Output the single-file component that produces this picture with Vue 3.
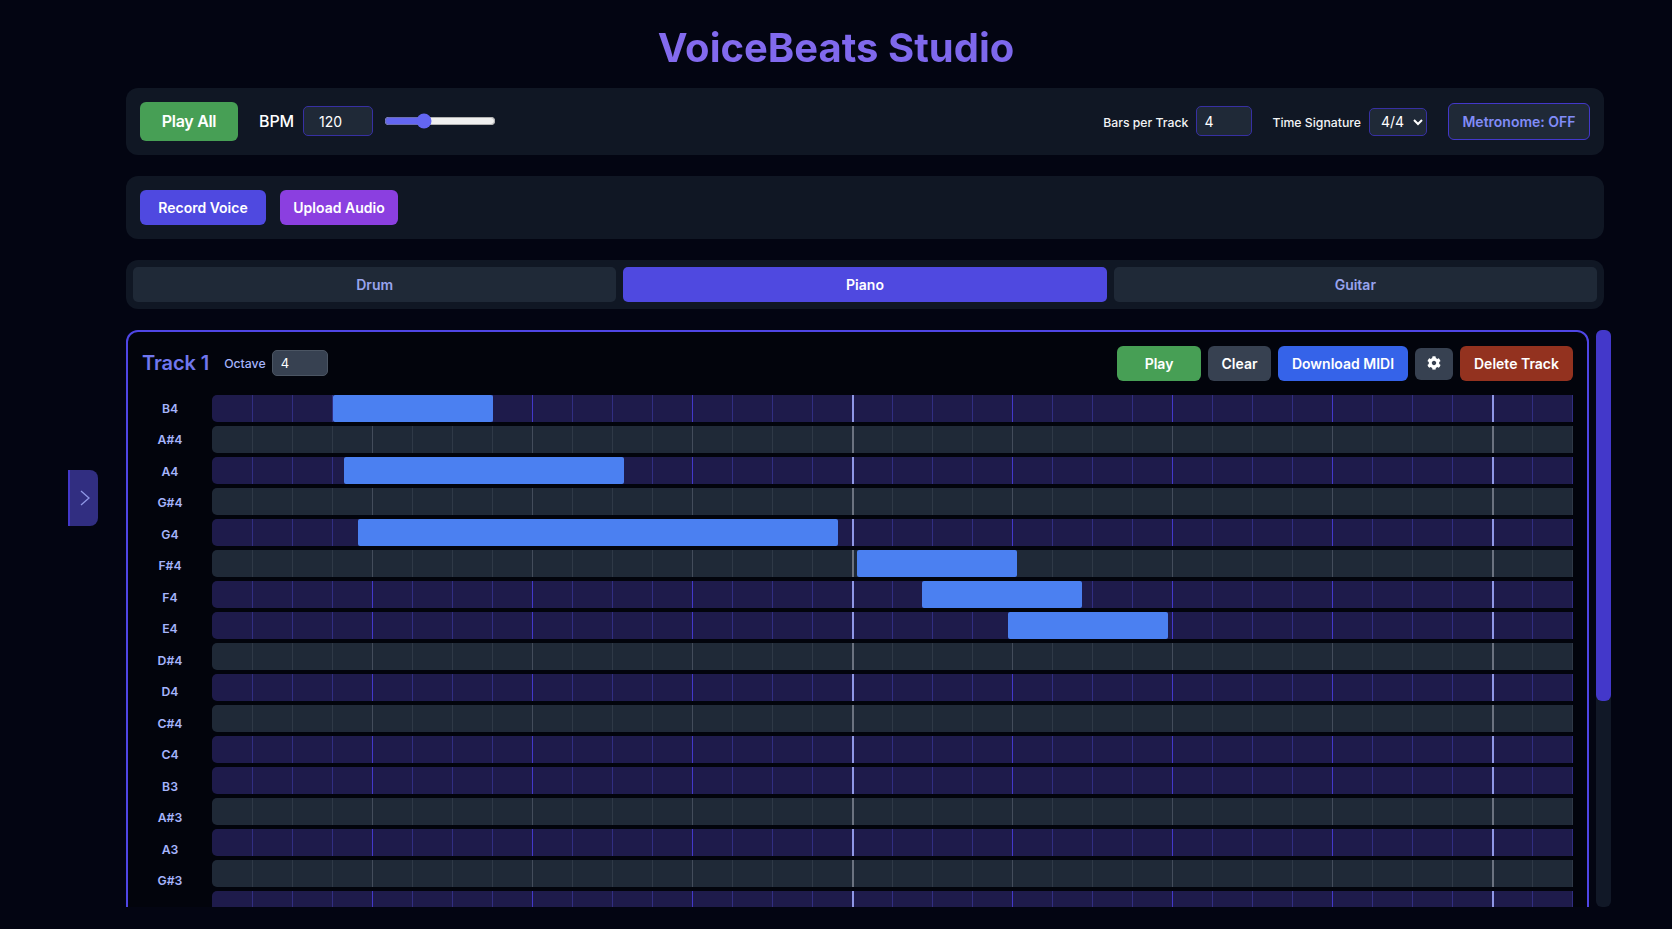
<template>
  <div class="page">
    <button class="side-toggle">
      <svg width="12" height="18" viewBox="0 0 12 18" fill="none"><path d="M3 2l8 7-8 7" stroke="#8f97e6" stroke-width="1.300" /></svg>
    </button>

    <h1 class="title">VoiceBeats Studio</h1>

    <div class="panel controls">
      <button class="btn btn-play-all">Play All</button>
      <span class="bpm-label">BPM</span>
      <input class="field bpm-input" type="number" value="120" />
      <input class="bpm-slider" type="range" min="60" max="240" value="120" />

      <div class="controls-right">
        <label class="small-label">Bars per Track</label>
        <input class="field bars-input" type="number" value="4" />
        <label class="small-label sig-label">Time Signature</label>
        <select class="field sig-select">
          <option>4/4</option>
          <option>3/4</option>
          <option>6/8</option>
        </select>
        <button class="btn btn-metronome">Metronome: OFF</button>
      </div>
    </div>

    <div class="panel actions">
      <button class="btn btn-record">Record Voice</button>
      <button class="btn btn-upload">Upload Audio</button>
    </div>

    <div class="panel tabs">
      <button
        v-for="tab in tabs"
        :key="tab"
        class="tab"
        :class="{ active: tab === 'Piano' }"
      >{{ tab }}</button>
    </div>

    <div class="tracks-area">
      <div class="tracks">
        <div class="track-card">
          <div class="track-header">
            <h2 class="track-name">Track 1</h2>
            <label class="octave-label">Octave</label>
            <input class="octave-input" type="number" value="4" />
            <div class="track-buttons">
              <button class="btn track-btn btn-play">Play</button>
              <button class="btn track-btn btn-clear">Clear</button>
              <button class="btn track-btn btn-download">Download MIDI</button>
              <button class="btn btn-gear" aria-label="Settings">
                <svg width="14" height="14" viewBox="0 0 512 512"><path fill="#fff" d="M487.4 315.7l-42.6-24.6c4.300-23.200 4.300-47 0-70.200l42.600-24.600c4.900-2.800 7.100-8.600 5.500-14-11.100-35.600-30-67.800-54.700-94.600-3.800-4.100-10-5.100-14.800-2.300L380.800 110c-17.900-15.400-38.500-27.300-60.800-35.100V25.800c0-5.600-3.900-10.500-9.400-11.700-36.700-8.200-74.300-7.800-109.200 0-5.500 1.200-9.400 6.100-9.400 11.700V75c-22.200 7.900-42.800 19.800-60.800 35.100L88.700 85.500c-4.900-2.800-11-1.900-14.800 2.300-24.700 26.700-43.600 58.900-54.700 94.600-1.700 5.400.6 11.200 5.500 14L67.300 221c-4.300 23.200-4.300 47 0 70.200l-42.600 24.600c-4.900 2.800-7.100 8.600-5.500 14 11.100 35.600 30 67.800 54.700 94.600 3.800 4.100 10 5.100 14.800 2.300l42.600-24.600c17.900 15.400 38.500 27.300 60.800 35.100v49.200c0 5.600 3.900 10.500 9.400 11.700 36.700 8.200 74.300 7.800 109.200 0 5.500-1.200 9.400-6.100 9.400-11.700v-49.200c22.200-7.900 42.800-19.800 60.800-35.100l42.600 24.600c4.900 2.800 11 1.900 14.800-2.300 24.700-26.700 43.600-58.900 54.700-94.600 1.500-5.500-.7-11.300-5.600-14.100zM256 336c-44.100 0-80-35.900-80-80s35.900-80 80-80 80 35.900 80 80-35.900 80-80 80z" /></svg>
              </button>
              <button class="btn track-btn btn-delete">Delete Track</button>
            </div>
          </div>

          <div class="roll">
            <div class="keys">
              <div v-for="row in rows" :key="row.name" class="key">{{ row.name }}</div>
            </div>
            <div class="grid">
              <div
                v-for="row in rows"
                :key="row.name"
                class="grid-row"
                :class="row.sharp ? 'sharp' : 'natural'"
              >
                <div
                  v-for="i in cellCount"
                  :key="i"
                  class="cell"
                  :class="cellClass(i - 1)"
                ></div>
                <div
                  v-for="note in notesFor(row.name)"
                  :key="note.left"
                  class="note"
                  :style="{ left: note.left + 'px', width: note.width + 'px' }"
                ></div>
              </div>
            </div>
          </div>
        </div>
      </div>

      <div class="scrollbar">
        <div class="scrollbar-thumb"></div>
      </div>
    </div>
  </div>
</template>

<script setup>
const tabs = ['Drum', 'Piano', 'Guitar']

const cellCount = 36

// rows going down from B4, only what fits in the view
const names = ['B', 'A#', 'A', 'G#', 'G', 'F#', 'F', 'E', 'D#', 'D', 'C#', 'C']
const rows = []
for (let i = 0; i < 17; i++) {
  const name = names[i % 12]
  const octave = 4 - Math.floor(i / 12)
  rows.push({ name: name + octave, sharp: name.includes('#') })
}

const notes = [
  { key: 'B4', left: 121, width: 160 },
  { key: 'A4', left: 132, width: 280 },
  { key: 'G4', left: 146, width: 480 },
  { key: 'F#4', left: 645, width: 160 },
  { key: 'F4', left: 710, width: 160 },
  { key: 'E4', left: 796, width: 160 }
]

const notesFor = (name) => notes.filter((n) => n.key === name)

const cellClass = (i) => {
  if (i === 0) return 'first'
  if (i % 16 === 0) return 'bar'
  if (i % 4 === 0) return 'beat'
  return ''
}
</script>

<style>
html,
body {
  margin: 0;
  background: #030512;
  overflow: hidden;
}
</style>

<style scoped>
.page {
  position: relative;
  box-sizing: border-box;
  height: 100vh;
  padding: 25px 68px 22px 126px;
  display: flex;
  flex-direction: column;
  gap: 21px;
  background: #030512;
  font-family: Inter, "Noto Sans", sans-serif;
  color: #fff;
}

.title {
  margin: 0 0 -4px -58px;
  text-align: center;
  font-size: 40px;
  line-height: 46px;
  font-weight: 700;
  background: linear-gradient(90deg, #8e70f2, #7262e8);
  -webkit-background-clip: text;
  background-clip: text;
  color: transparent;
}

.side-toggle {
  position: absolute;
  left: 68px;
  top: 470px;
  width: 30px;
  height: 56px;
  padding: 0;
  border: 0;
  border-left: 2px solid #4338ca;
  border-radius: 0 8px 8px 0;
  background: #312e81;
  display: flex;
  align-items: center;
  justify-content: center;
}

.panel {
  flex: none;
  box-sizing: border-box;
  background: #101724;
  border-radius: 12px;
  display: flex;
  align-items: center;
}

.btn {
  border: 0;
  border-radius: 6px;
  color: #fff;
  font-family: inherit;
  font-weight: 600;
  font-size: 14px;
  padding: 0;
}

.controls {
  height: 67px;
  padding: 0 14px;
}

.btn-play-all {
  width: 98px;
  height: 39px;
  padding-bottom: 1px;
  font-size: 16px;
  letter-spacing: -0.3px;
  background: #479f55;
}

.bpm-label {
  margin: 0 0 1px 21px;
  font-size: 16px;
  font-weight: 500;
  letter-spacing: -0.1px;
}

.field {
  box-sizing: border-box;
  background: #1f2937;
  border: 1px solid #3730a3;
  border-radius: 5px;
  color: #fff;
  font-family: inherit;
  font-size: 14px;
}

.bpm-input {
  width: 70px;
  height: 30px;
  margin: -1px 0 0 9px;
  padding: 0 0 0 15px;
}

.bpm-slider {
  width: 112px;
  margin: -1px 0 0 11px;
  accent-color: #6366f1;
}

.controls-right {
  margin-left: auto;
  display: flex;
  align-items: center;
}

.small-label {
  margin-top: 1px;
  font-size: 12.25px;
  font-weight: 500;
  color: #f3f4f6;
}

.bars-input {
  width: 56px;
  height: 30px;
  margin: -1px 0 0 8px;
  padding: 0 0 0 7px;
}

.sig-label {
  margin-left: 20px;
}

.sig-select {
  width: 58px;
  height: 28px;
  margin-left: 8px;
  padding: 0 0 0 7px;
}

.btn-metronome {
  box-sizing: border-box;
  width: 142px;
  height: 37px;
  margin-left: 21px;
  background: #1f2937;
  border: 1px solid #4338ca;
  color: #818cf8;
}

.actions {
  height: 63px;
  padding: 0 14px;
  gap: 14px;
}

.btn-record {
  width: 126px;
  height: 35px;
  background: #4f49e0;
}

.btn-upload {
  width: 118px;
  height: 35px;
  background: #8b3fe0;
}

.tabs {
  height: 49px;
  padding: 0 7px;
  gap: 7px;
}

.tab {
  flex: 1;
  height: 35px;
  border: 0;
  border-radius: 5px;
  background: #1f2937;
  color: #98a4ee;
  font-family: inherit;
  font-size: 14px;
  font-weight: 600;
  padding: 0;
}

.tab.active {
  background: #4f49e0;
  color: #fff;
}

.tracks-area {
  flex: 1;
  min-height: 0;
  margin-right: -7px;
  display: flex;
  gap: 7px;
}

.tracks {
  flex: 1;
  min-width: 0;
  overflow: hidden;
}

.scrollbar {
  flex: none;
  width: 15px;
  background: #111827;
  border-radius: 6px;
}

.scrollbar-thumb {
  height: 371px;
  background: #4338ca;
  border-radius: 6px;
}

.track-card {
  padding: 14px;
  border: 2px solid #4f46e5;
  border-radius: 12px;
  background: #02040c;
}

.track-header {
  display: flex;
  align-items: center;
  height: 35px;
  margin-bottom: 14px;
}

.track-name {
  margin: 0 0 1px;
  font-size: 20px;
  font-weight: 600;
  letter-spacing: -0.1px;
  color: #7077ee;
}

.octave-label {
  margin: 0 0 1px 15px;
  font-size: 12.25px;
  font-weight: 500;
  color: #a5b4fc;
}

.octave-input {
  box-sizing: border-box;
  width: 56px;
  height: 26px;
  margin: 0 0 1px 6px;
  padding: 0 0 0 8px;
  background: #374151;
  border: 1px solid #4b5563;
  border-radius: 5px;
  color: #fff;
  font-family: inherit;
  font-size: 13px;
}

.track-buttons {
  margin-left: auto;
  display: flex;
  align-items: center;
  gap: 7px;
}

.track-btn {
  height: 35px;
}

.btn-play {
  width: 84px;
  background: #479f55;
}

.btn-clear {
  width: 63px;
  background: #374151;
}

.btn-download {
  width: 130px;
  background: #3563e9;
}

.btn-gear {
  width: 38px;
  height: 32px;
  padding: 0 1px 2px 0;
  background: #374151;
  display: flex;
  align-items: center;
  justify-content: center;
}

.btn-delete {
  width: 113px;
  background: #93321f;
}

.roll {
  display: flex;
  gap: 14px;
}

.keys {
  flex: none;
  width: 56px;
  margin-top: -0.3px;
}

.key {
  height: 27.47px;
  margin-bottom: 4px;
  display: flex;
  align-items: center;
  justify-content: center;
  font-size: 12.25px;
  font-weight: 600;
  color: #a5b4fc;
}

.grid {
  flex: 1;
  min-width: 0;
  overflow: hidden;
}

.grid-row {
  position: relative;
  display: flex;
  width: 2560px;
  height: 27.2px;
  margin-bottom: 3.83px;
  border-radius: 5px;
  overflow: hidden;
}

.grid-row.natural {
  background: #1e1b4b;
}

.grid-row.sharp {
  background: #1f2937;
}

.cell {
  flex: none;
  box-sizing: border-box;
  width: 40px;
  border-left: 1px solid;
}

.cell.first {
  border-left: 0;
}

.natural .cell {
  border-color: #312e81;
}

.natural .cell.beat {
  border-color: #4338ca;
}

.natural .cell.bar {
  border-left-width: 2px;
  border-color: #8f97e6;
}

.sharp .cell {
  border-color: #2f3947;
}

.sharp .cell.beat {
  border-color: #434c5b;
}

.sharp .cell.bar {
  border-left-width: 2px;
  border-color: #6b7280;
}

.note {
  position: absolute;
  top: 0;
  bottom: 0;
  background: #4b80f1;
  border-radius: 2px;
}
</style>
